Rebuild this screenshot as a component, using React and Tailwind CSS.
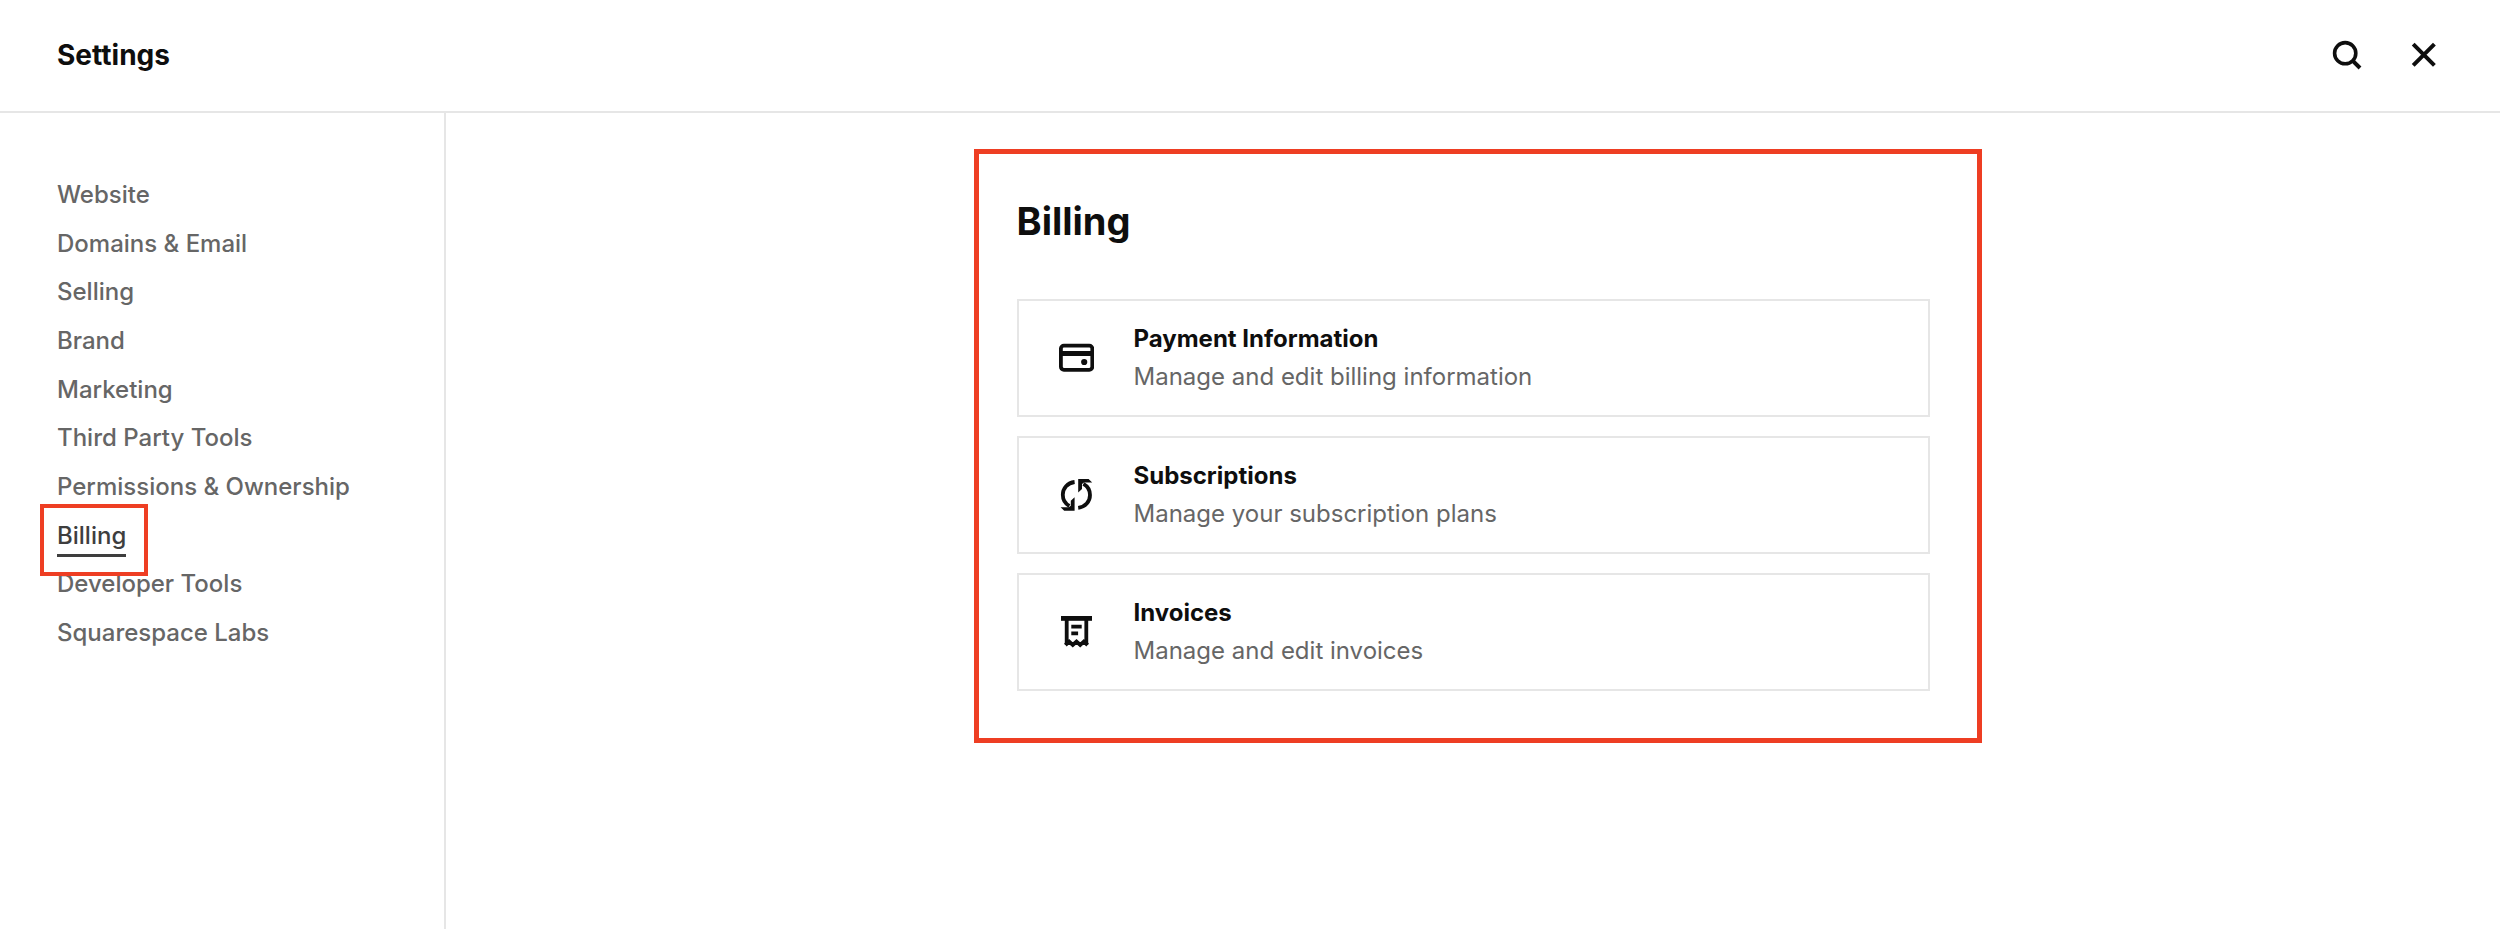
import React, { useState } from "react";

const navItems = [
  "Website",
  "Domains & Email",
  "Selling",
  "Brand",
  "Marketing",
  "Third Party Tools",
  "Permissions & Ownership",
  "Billing",
  "Developer Tools",
  "Squarespace Labs"
];

const SearchIcon = () => (
  <svg width="30" height="30" viewBox="0 0 30 30" fill="none" stroke="currentColor" strokeWidth="3.6">
    <circle cx="13.2" cy="13.2" r="10.6" />
    <path d="M20.6 20.6l7.4 7.4" strokeWidth="4" />
  </svg>
);

const CloseIcon = () => (
  <svg width="30" height="30" viewBox="0 0 30 30" fill="none" stroke="currentColor" strokeWidth="4">
    <path d="M4.2 4.2l21.2 21.2M25.4 4.2L4.2 25.4" />
  </svg>
);

const CardIcon = () => (
  <svg width="36" height="36" viewBox="0 0 36 36" fill="none">
    <rect x="2.9" y="5.6" width="31.4" height="24.2" rx="3" stroke="currentColor" strokeWidth="3.8" />
    <path d="M2 13.4h33" stroke="currentColor" strokeWidth="5" />
    <circle cx="26.2" cy="22" r="3.1" fill="currentColor" />
  </svg>
);

const RenewIcon = () => (
  <svg width="36" height="36" viewBox="0 0 36 36">
    <path
      d="M16.6 5C9.5 5.8 4.8 11.3 4.8 17.8c0 4.9 2.6 9 6.6 11.2M20.2 30.8c7.1-.8 11.8-6.3 11.8-12.8 0-4.9-2.6-9-6.6-11.2"
      fill="none"
      stroke="currentColor"
      strokeWidth="3.8"
    />
    <path d="M20.2 2H30.6L34.2 5.6H26L24 7V12L20.2 15.6z" fill="currentColor" />
    <path d="M16.6 33.8H6.2L2.6 30.2H10.8L12.8 28.8V23.8L16.6 20.2z" fill="currentColor" />
  </svg>
);

const InvoiceIcon = () => (
  <svg width="36" height="36" viewBox="0 0 36 36" fill="none" stroke="currentColor">
    <path d="M3 4.4h31" strokeWidth="4.8" />
    <path d="M8.7 4v27M28.3 4v27M13.3 12.6h10.4M13.3 19.4h6.8" strokeWidth="3.8" />
    <path d="M7.4 31l3.7-3.4 3.7 3.4 3.7-3.4 3.7 3.4 3.7-3.4 3.7 3.4" strokeWidth="3.8" />
  </svg>
);

const options = [
  { title: "Payment Information", text: "Manage and edit billing information", Icon: CardIcon },
  { title: "Subscriptions", text: "Manage your subscription plans", Icon: RenewIcon },
  { title: "Invoices", text: "Manage and edit invoices", Icon: InvoiceIcon }
];

const App = () => {
  const [active, setActive] = useState("Billing");

  return (
    <div className="flex min-h-screen flex-col bg-white font-['Inter','Liberation_Sans',sans-serif] text-[#0e0e0e]">
      <header className="flex h-[113px] items-center justify-between border-b-2 border-[#e6e6e6] pr-[61px] pb-0.5 pl-[57px]">
        <h1 className="text-[28px] leading-8 font-bold">Settings</h1>
        <div className="flex gap-[47px]">
          <button aria-label="Search">
            <SearchIcon />
          </button>
          <button aria-label="Close">
            <CloseIcon />
          </button>
        </div>
      </header>

      <div className="flex flex-1">
        <nav className="w-[446px] shrink-0 border-r-2 border-[#e6e6e6] pt-[66px] pl-[57px]">
          <ul className="flex h-[470px] flex-col justify-between">
            {navItems.map((item) => (
              <li key={item} className="flex">
                <a
                  href="#"
                  onClick={() => setActive(item)}
                  className={
                    item === active
                      ? "relative text-2xl leading-8 font-medium text-[#3e3e3e]"
                      : "text-2xl leading-8 font-medium text-[#666666]"
                  }
                >
                  {item}
                  {item === active && (
                    <>
                      <span className="absolute inset-x-0 -bottom-[5px] h-[3px] bg-[#3e3e3e]" />
                      <span className="absolute -top-4 -right-[22px] -bottom-6 -left-[17px] border-4 border-[#ee3e23]" />
                    </>
                  )}
                </a>
              </li>
            ))}
          </ul>
        </nav>

        <main className="flex-1 px-16 pt-[84px]">
          <section className="relative mx-auto max-w-[913px]">
            <div className="pointer-events-none absolute -top-12 -right-[52px] -bottom-[52px] -left-[43px] border-[5px] border-[#ee3e23]" />
            <h2 className="text-[38px] leading-12 font-bold">Billing</h2>
            <div className="mt-[54px] flex flex-col gap-[19px]">
              {options.map(({ title, text, Icon }) => (
                <button
                  key={title}
                  className="flex h-[118px] items-center gap-10 border-2 border-[#e6e6e6] pl-[39px] text-left"
                >
                  <Icon />
                  <span>
                    <span className="block text-2xl leading-[38px] font-bold">{title}</span>
                    <span className="block text-2xl leading-[38px] text-[#666666]">{text}</span>
                  </span>
                </button>
              ))}
            </div>
          </section>
        </main>
      </div>
    </div>
  );
};

export default App;
